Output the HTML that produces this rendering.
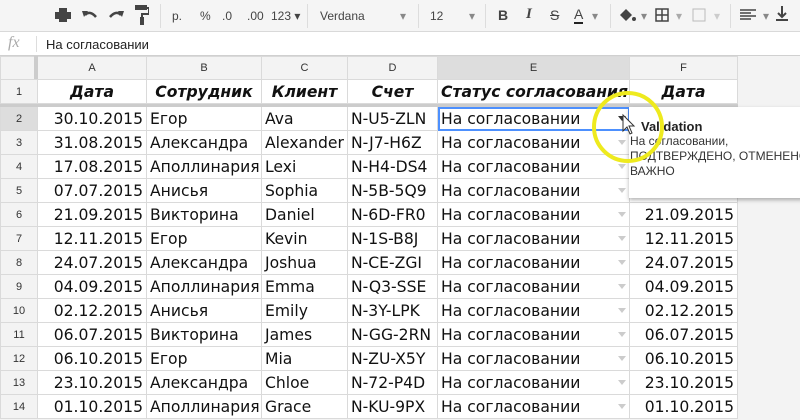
<!DOCTYPE html>
<html><head><meta charset="utf-8"><style>
*{box-sizing:border-box;margin:0;padding:0}
body{width:800px;height:420px;overflow:hidden;background:#f3f3f3;font-family:"DejaVu Sans",Verdana,sans-serif;position:relative}
.tb{position:absolute;left:0;top:0;width:800px;height:32px;background:#f5f5f5;border-bottom:1px solid #d9d9d9;font-family:"Liberation Sans",Arial,sans-serif;color:#444}
.tb span{position:absolute;top:9px;font-size:12px}
.sep{position:absolute;top:4px;width:1px;height:24px;background:#ddd}
.fx{position:absolute;left:0;top:32px;width:800px;height:24px;background:#fff;border-bottom:1px solid #d0d0d0}
table{position:absolute;left:0;top:56px;border-collapse:collapse;table-layout:fixed;width:737px}
td{border:1px solid #dadada;height:24px;font-size:15.6px;padding:0 3px;white-space:nowrap;overflow:hidden;background:#fff;color:#111;position:relative}
tr.ch td{background:#f3f3f3;font-family:"Liberation Sans",Arial,sans-serif;font-size:11px;color:#333;text-align:center;height:23px}
td.rn{background:#f3f3f3;font-family:"Liberation Sans",Arial,sans-serif;font-size:11px;color:#333;text-align:center;padding:0}
tr.h td{font-weight:bold;font-style:italic;text-align:center;height:24px}
td.r{text-align:right}
.ar{position:absolute;right:3px;top:9px;width:0;height:0;border-left:4px solid transparent;border-right:4px solid transparent;border-top:5px solid #ccc}
</style></head><body>
<div class="tb">
<svg style="position:absolute;left:55px;top:8px" width="16" height="14"><rect x="4" y="0" width="8" height="4" fill="#444"/><rect x="0" y="4" width="16" height="7" fill="#444"/><rect x="4" y="9" width="8" height="5" fill="#444"/></svg>
<svg style="position:absolute;left:82px;top:9px" width="16" height="12"><path d="M3 6 Q8 1 14 8" stroke="#444" stroke-width="2.5" fill="none"/><path d="M0 2 L6 2 L2 8Z" fill="#444"/></svg>
<svg style="position:absolute;left:108px;top:9px" width="16" height="12"><path d="M13 6 Q8 1 2 8" stroke="#444" stroke-width="2.5" fill="none"/><path d="M16 2 L10 2 L14 8Z" fill="#444"/></svg>
<svg style="position:absolute;left:135px;top:5px" width="14" height="20"><rect x="0" y="0" width="12" height="5" fill="#444"/><path d="M12 3 H14 V9 H7 V12" stroke="#444" stroke-width="2" fill="none"/><rect x="5" y="12" width="4" height="8" fill="#444"/></svg>
<div class="sep" style="left:160px"></div>
<span style="left:172px">р.</span><span style="left:200px">%</span><span style="left:222px">.0</span><span style="left:247px">.00</span><span style="left:271px">123 ▾</span>
<div class="sep" style="left:307px"></div>
<span style="left:320px">Verdana</span><span style="left:400px;color:#888">▾</span>
<div class="sep" style="left:418px"></div>
<span style="left:430px">12</span><span style="left:469px;color:#888">▾</span>
<div class="sep" style="left:485px"></div>
<span style="left:498px;font-weight:bold;font-size:14px;top:7px">B</span><span style="left:526px;font-style:italic;font-family:'Liberation Serif';font-size:15px;top:6px;font-weight:bold">I</span><span style="left:550px;text-decoration:line-through;font-size:14px;top:7px">S</span><span style="left:574px;font-size:14px;top:6px;border-bottom:2px solid #222;line-height:16px">A</span><span style="left:592px;color:#888">▾</span>
<div class="sep" style="left:610px"></div>
<svg style="position:absolute;left:618px;top:7px" width="18" height="16"><path d="M2 8 L8 2 L14 8 L8 14Z" fill="#444"/><circle cx="16" cy="12" r="2" fill="#444"/></svg><span style="left:641px;color:#888">▾</span>
<svg style="position:absolute;left:655px;top:8px" width="14" height="14"><rect x="1" y="1" width="12" height="12" stroke="#444" stroke-width="1.5" fill="none"/><path d="M7 1V13M1 7H13" stroke="#444" stroke-width="1.5"/></svg><span style="left:676px;color:#aaa">▾</span>
<svg style="position:absolute;left:692px;top:8px" width="14" height="14"><rect x="1" y="1" width="12" height="12" stroke="#bbb" fill="none"/></svg><span style="left:714px;color:#ccc">▾</span>
<div class="sep" style="left:730px"></div>
<svg style="position:absolute;left:740px;top:9px" width="16" height="12"><path d="M0 1H16M0 4H11M0 7H16M0 10H11" stroke="#444" stroke-width="1.5"/></svg><span style="left:763px;color:#888">▾</span>
<svg style="position:absolute;left:776px;top:6px" width="12" height="16"><path d="M6 0V11M2 7L6 11L10 7M0 14H12" stroke="#444" stroke-width="2" fill="none"/></svg>
</div>
<div class="fx"><span style="position:absolute;left:8px;top:2px;font-family:'Liberation Serif';font-style:italic;font-size:16px;color:#aaa">fx</span><div style="position:absolute;left:36px;top:4px;width:1px;height:16px;background:#ddd"></div><span style="position:absolute;left:46px;top:5px;font-family:'Liberation Sans',Arial;font-size:13px;color:#222">На согласовании</span></div>
<table>
<colgroup><col style="width:37px"><col style="width:109px"><col style="width:115px"><col style="width:86px"><col style="width:90px"><col style="width:192px"><col style="width:108px"></colgroup>
<tr class="ch"><td></td><td>A</td><td>B</td><td>C</td><td>D</td><td style="background:#ddd">E</td><td>F</td></tr>
<tr class="h"><td class="rn" style="font-weight:normal;font-style:normal">1</td><td>Дата</td><td>Сотрудник</td><td>Клиент</td><td>Счет</td><td>Статус согласования</td><td>Дата</td></tr>
<tr><td class="rn" style="height:3px;background:#ccc;border-color:#ccc"></td><td colspan="6" style="height:3px;background:#ccc;border-color:#ccc;padding:0"></td></tr>
<tr><td class="rn" style="background:#ddd">2</td><td class="r">30.10.2015</td><td>Егор</td><td>Ava</td><td>N-U5-ZLN</td><td style="outline:2px solid #4d90fe;outline-offset:-2px">На согласовании<i class="ar" style="border-top-color:#333"></i></td><td class="r">30.10.2015</td></tr>
<tr><td class="rn">3</td><td class="r">31.08.2015</td><td>Александра</td><td>Alexander</td><td>N-J7-H6Z</td><td>На согласовании<i class="ar"></i></td><td class="r">31.08.2015</td></tr>
<tr><td class="rn">4</td><td class="r">17.08.2015</td><td>Аполлинария</td><td>Lexi</td><td>N-H4-DS4</td><td>На согласовании<i class="ar"></i></td><td class="r">17.08.2015</td></tr>
<tr><td class="rn">5</td><td class="r">07.07.2015</td><td>Анисья</td><td>Sophia</td><td>N-5B-5Q9</td><td>На согласовании<i class="ar"></i></td><td class="r">07.07.2015</td></tr>
<tr><td class="rn">6</td><td class="r">21.09.2015</td><td>Викторина</td><td>Daniel</td><td>N-6D-FR0</td><td>На согласовании<i class="ar"></i></td><td class="r">21.09.2015</td></tr>
<tr><td class="rn">7</td><td class="r">12.11.2015</td><td>Егор</td><td>Kevin</td><td>N-1S-B8J</td><td>На согласовании<i class="ar"></i></td><td class="r">12.11.2015</td></tr>
<tr><td class="rn">8</td><td class="r">24.07.2015</td><td>Александра</td><td>Joshua</td><td>N-CE-ZGI</td><td>На согласовании<i class="ar"></i></td><td class="r">24.07.2015</td></tr>
<tr><td class="rn">9</td><td class="r">04.09.2015</td><td>Аполлинария</td><td>Emma</td><td>N-Q3-SSE</td><td>На согласовании<i class="ar"></i></td><td class="r">04.09.2015</td></tr>
<tr><td class="rn">10</td><td class="r">02.12.2015</td><td>Анисья</td><td>Emily</td><td>N-3Y-LPK</td><td>На согласовании<i class="ar"></i></td><td class="r">02.12.2015</td></tr>
<tr><td class="rn">11</td><td class="r">06.07.2015</td><td>Викторина</td><td>James</td><td>N-GG-2RN</td><td>На согласовании<i class="ar"></i></td><td class="r">06.07.2015</td></tr>
<tr><td class="rn">12</td><td class="r">06.10.2015</td><td>Егор</td><td>Mia</td><td>N-ZU-X5Y</td><td>На согласовании<i class="ar"></i></td><td class="r">06.10.2015</td></tr>
<tr><td class="rn">13</td><td class="r">23.10.2015</td><td>Александра</td><td>Chloe</td><td>N-72-P4D</td><td>На согласовании<i class="ar"></i></td><td class="r">23.10.2015</td></tr>
<tr><td class="rn">14</td><td class="r">01.10.2015</td><td>Аполлинария</td><td>Grace</td><td>N-KU-9PX</td><td>На согласовании<i class="ar"></i></td><td class="r">01.10.2015</td></tr>
</table>
<div style="position:absolute;left:34px;top:56px;width:4px;height:23px;background:#ccc"></div>
<div style="position:absolute;left:629px;top:107px;width:175px;height:91px;background:#fff;box-shadow:0 2px 4px rgba(0,0,0,.3);font-family:'Liberation Sans',Arial,sans-serif;font-size:12px;color:#333;line-height:15px;padding:12px 0 0 1px;white-space:nowrap">
<div style="font-weight:bold;font-size:13px;margin-left:11px;color:#222">Validation</div>
<div>На согласовании,</div><div>ПОДТВЕРЖДЕНО, ОТМЕНЕНО,</div><div>ВАЖНО</div></div>
<svg style="position:absolute;left:585px;top:82px" width="90" height="90"><circle cx="43" cy="45" r="34" stroke="#eeea1e" stroke-width="4" fill="none"/><path d="M38 33 V49 L42 45 L45 52 L47 51 L44 44 L49 44Z" fill="#fff" stroke="#333" stroke-width="1"/></svg>
</body></html>
